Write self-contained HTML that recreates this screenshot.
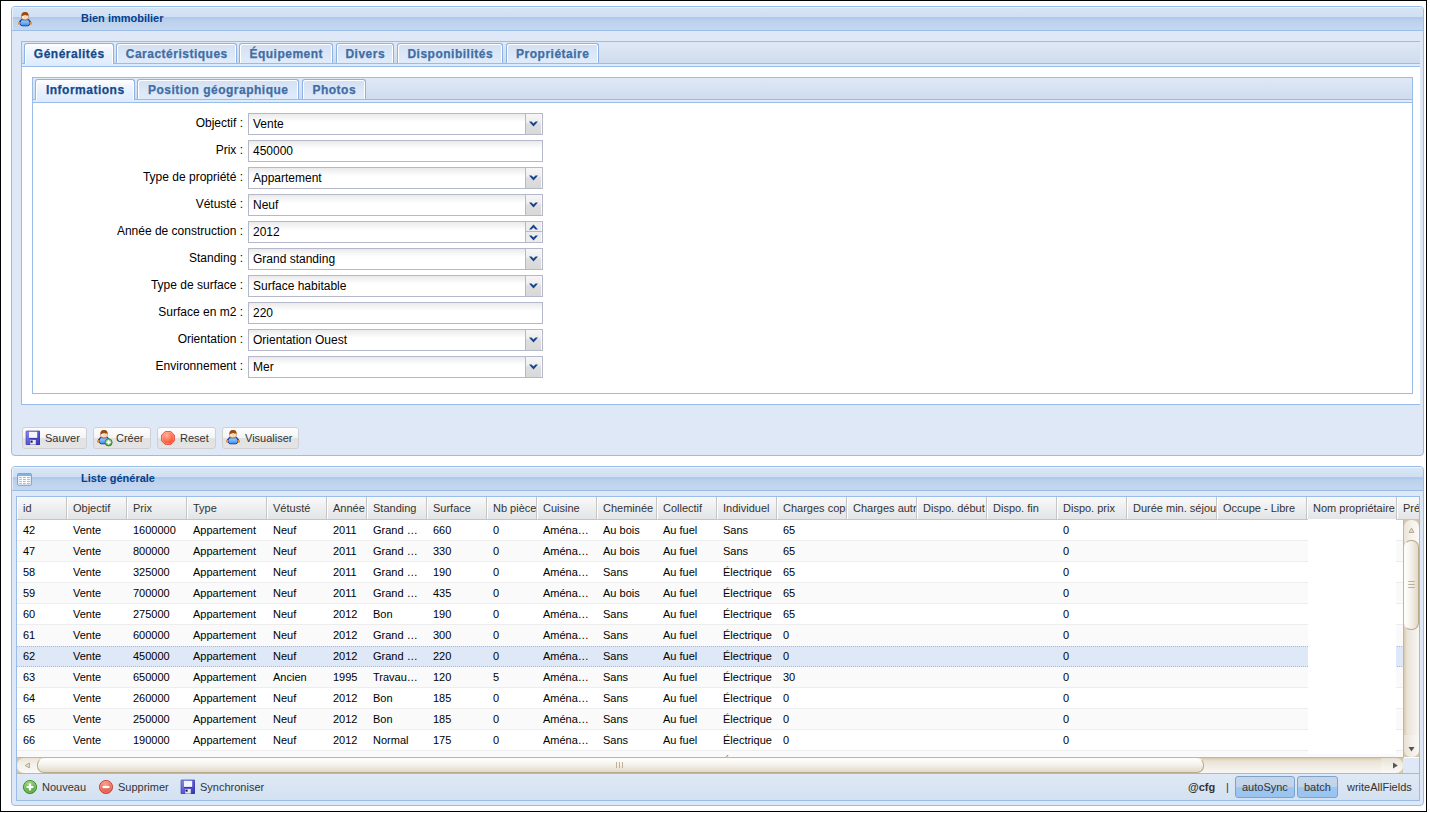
<!DOCTYPE html>
<html><head><meta charset="utf-8">
<style>
*{box-sizing:border-box;margin:0;padding:0}
html,body{width:1430px;height:813px;overflow:hidden;background:#fff;font-family:"Liberation Sans",sans-serif;color:#000}
.a{position:absolute}
#frame{left:0;top:0;width:1427px;height:812px;border:1px solid #000}
.panel{border:1px solid #99bce8;border-radius:4px;background:#dfe8f6;overflow:hidden}
.phdr{left:0;top:0;right:0;height:24px;border-bottom:1px solid #99bce8;
 background:linear-gradient(#d9e6f5 0px,#cfdff2 10px,#abc6ea 10.6px,#b3cbeb 12px,#bbd0ec 13px,#c6d8ef 23px);
 box-shadow:inset 1px 1px 0 rgba(255,255,255,.55)}
.ptitle{font:bold 11px "Liberation Sans",sans-serif;color:#04408c;white-space:nowrap}
.tabbar{border-top:1px solid #99bce8;border-left:1px solid #99bce8;background:linear-gradient(#dfe8f5,#cfdcee)}
.strip{height:4px;border-top:1px solid #99bce8;border-bottom:1px solid #99bce8;background:#deecfd}
.tab{top:2px;height:20px;border:1px solid #8db2e3;border-bottom:0;border-radius:3px 3px 0 0;
 background:linear-gradient(#d3e0f3,#dce8f8 60%,#e0ebfa);box-shadow:inset 1px 1px 0 #fff,inset -1px 0 0 #fff;
 font:bold 12px "Liberation Sans",sans-serif;color:#416da3;text-align:center;line-height:20px;white-space:nowrap;letter-spacing:0.5px;text-indent:0.5px;-webkit-text-stroke:0.25px currentColor}
.tab.act{height:21px;overflow:visible;background:linear-gradient(#fff 0%,#eef5fe 30%,#deecfd 100%);color:#15498b}
.lbl{font:12px "Liberation Sans",sans-serif;text-align:right;white-space:nowrap;width:200px;left:43px}
.fld{left:248px;width:295px;height:22px;border:1px solid #b5b8c8;background:linear-gradient(#eaeaea 0,#fff 8px,#fff);
 font:12px "Liberation Sans",sans-serif;padding-left:4px;line-height:20px;white-space:nowrap}
.trg{right:0;top:0;width:17px;height:20px;border-left:1px solid #b5b8c8;background:linear-gradient(#f6f6f6 0,#eeeeee 40%,#dedede 50%,#d8d8d8 100%);box-shadow:inset -1px 0 0 #fafafa}
.btn{top:427px;height:22px;border:1px solid #d0d0d0;border-radius:3px;
 background:linear-gradient(#fdfdfd 0,#f4f4f4 50%,#e2e2e2 50%,#e4e4e4 100%);
 font:11px "Liberation Sans",sans-serif;color:#333;white-space:nowrap}
.ghd{font:11px "Liberation Sans",sans-serif;color:#333;white-space:nowrap}
.cell{font:11px "Liberation Sans",sans-serif;white-space:nowrap}
.tb{font:11px "Liberation Sans",sans-serif;color:#333;white-space:nowrap}
.tab.act::after{content:"";position:absolute;left:0;right:0;bottom:-1px;height:1px;background:#deecfd}
</style></head><body>
<svg width="0" height="0" style="position:absolute">
<defs>
 <linearGradient id="gBody" x1="0" y1="0" x2="0" y2="1"><stop offset="0" stop-color="#9ad8ff"/><stop offset="1" stop-color="#3b8cf2"/></linearGradient>
 <radialGradient id="gFace" cx="0.5" cy="0.55" r="0.5"><stop offset="0" stop-color="#fde3c6"/><stop offset="1" stop-color="#efb883"/></radialGradient>
 <linearGradient id="gDisk" x1="0" y1="0" x2="1" y2="1"><stop offset="0" stop-color="#8f8ff0"/><stop offset="0.5" stop-color="#5a5ad8"/><stop offset="1" stop-color="#3434a8"/></linearGradient>
 <radialGradient id="gRed" cx="0.4" cy="0.3" r="0.75"><stop offset="0" stop-color="#ffb49a"/><stop offset="0.6" stop-color="#ff6a48"/><stop offset="1" stop-color="#f03a18"/></radialGradient>
 <radialGradient id="gRed2" cx="0.45" cy="0.3" r="0.7"><stop offset="0" stop-color="#f7a690"/><stop offset="1" stop-color="#e0463a"/></radialGradient>
 <radialGradient id="gGreen" cx="0.45" cy="0.3" r="0.7"><stop offset="0" stop-color="#a8dc8c"/><stop offset="1" stop-color="#3f9a2c"/></radialGradient>
 <symbol id="iUser" viewBox="0 0 16 16">
  <path d="M4.9 8.1L2.3 11.2M11.1 8.1L13.7 11.2" stroke="#1b3db5" stroke-width="1.2"/>
  <path d="M4.3 8.8H11.7L12.9 11.6L12.3 14.1L10.9 14.8H5.1L3.7 14.1L3.1 11.6Z" fill="url(#gBody)" stroke="#1d3aa6" stroke-width="0.95"/>
  <ellipse cx="2.2" cy="12.3" rx="1.2" ry="1.55" fill="#e98a2c"/>
  <ellipse cx="13.8" cy="12.3" rx="1.2" ry="1.55" fill="#e98a2c"/>
  <path d="M4.8 4.5Q4.7 1.3 8 1.3Q11.3 1.3 11.2 4.5L11.1 7.3Q10.6 9 8 9Q5.4 9 4.9 7.3Z" fill="#f8d7b4" stroke="#b9672a" stroke-width="0.7"/>
  <circle cx="6" cy="6" r="0.9" fill="#fff" opacity="0.8"/><circle cx="10.4" cy="6" r="0.8" fill="#fff" opacity="0.7"/>
  <path d="M4.45 5.6Q4.1 1.05 8 1.05Q11.9 1.05 11.55 5.2Q11 4.2 10.3 4.4Q9.4 4.9 8.8 4.2Q7.4 3.6 4.45 5.6Z" fill="#9c4a14"/>
 </symbol>
 <symbol id="iDisk" viewBox="0 0 16 16">
  <rect x="2" y="2" width="14" height="14" rx="0.8" fill="url(#gDisk)" stroke="#3030a0" stroke-width="0.6"/>
  <rect x="5" y="2.8" width="8.2" height="6.4" fill="#f4f6fb"/>
  <path d="M5 9.4H13.2" stroke="#2a2ab0" stroke-width="0.9"/>
  <rect x="6.2" y="11" width="5.6" height="4.6" fill="#e8e8f0"/>
  <rect x="6.6" y="11.6" width="2" height="2" fill="#111"/>
 </symbol>
 <symbol id="iGrid" viewBox="0 0 16 16">
  <rect x="1.7" y="2.6" width="13.6" height="11.6" rx="0.7" fill="#fff" stroke="#5b8ed0" stroke-width="0.9"/>
  <rect x="1.7" y="2.6" width="13.6" height="2.4" fill="#80b2e8"/>
  <g stroke="#a8a8a8" stroke-width="0.9">
   <path d="M3.2 6.4H5.9M7 6.4H9.8M11 6.4H13.9"/>
   <path d="M3.2 8.4H5.9M7 8.4H9.8M11 8.4H13.9"/>
   <path d="M3.2 10.4H5.9M7 10.4H9.8M11 10.4H13.9"/>
   <path d="M3.2 12.4H5.9M7 12.4H9.8M11 12.4H13.9"/>
  </g>
 </symbol>
 <symbol id="iStop" viewBox="0 0 16 16">
  <path d="M5.2 1.5H10.8L14.5 5.2V10.8L10.8 14.5H5.2L1.5 10.8V5.2Z" fill="url(#gRed)" stroke="#e0564a" stroke-width="0.9"/>
  <path d="M5.6 2.6H10.4L13.4 5.6V10.4L10.4 13.4H5.6L2.6 10.4V5.6Z" fill="none" stroke="#ffc0b0" stroke-width="0.6" opacity="0.8"/>
 </symbol>
 <symbol id="iAdd" viewBox="0 0 16 16">
  <circle cx="8" cy="8" r="6.6" fill="url(#gGreen)" stroke="#3c8c2a" stroke-width="0.9"/>
  <circle cx="8" cy="8" r="5.4" fill="none" stroke="#c8ecb8" stroke-width="0.5" opacity="0.7"/>
  <path d="M8 4.6V11.4M4.6 8H11.4" stroke="#fff" stroke-width="2.2"/>
 </symbol>
 <symbol id="iDel" viewBox="0 0 16 16">
  <circle cx="8" cy="8" r="6.6" fill="url(#gRed2)" stroke="#c84434" stroke-width="0.9"/>
  <circle cx="8" cy="8" r="5.4" fill="none" stroke="#f8c8c0" stroke-width="0.5" opacity="0.7"/>
  <path d="M4.6 8H11.4" stroke="#fff" stroke-width="2.2"/>
 </symbol>
</defs></svg>
<div id="frame" class="a"></div>

<!-- PANEL 1 -->
<div class="a panel" style="left:11px;top:6px;width:1413px;height:450px">
 <div class="a phdr"></div>
</div>
<div class="a ptitle" style="left:81px;top:12px">Bien immobilier</div>

<!-- OUTER TABPANEL -->
<div class="a" style="left:21px;top:41px;width:1399px;height:364px;border:1px solid #99bce8;border-right:0;background:#fff"></div>
<div class="a tabbar" style="left:22px;top:42px;width:1398px;height:21px;border:0"></div>
<div class="a strip" style="left:22px;top:63px;width:1398px"></div>
<div class="a tab act" style="left:24px;top:43px;width:90px">Généralités</div>
<div class="a tab" style="left:116px;top:43px;width:121px">Caractéristiques</div>
<div class="a tab" style="left:239px;top:43px;width:94px">Équipement</div>
<div class="a tab" style="left:336px;top:43px;width:58px">Divers</div>
<div class="a tab" style="left:397px;top:43px;width:106px">Disponibilités</div>
<div class="a tab" style="left:506px;top:43px;width:93px">Propriétaire</div>

<!-- INNER TABPANEL -->
<div class="a" style="left:32px;top:77px;width:1381px;height:317px;border:1px solid #99bce8;background:#fff"></div>
<div class="a tabbar" style="left:33px;top:78px;width:1379px;height:21px;border:0"></div>
<div class="a strip" style="left:33px;top:99px;width:1379px"></div>
<div class="a tab act" style="left:35px;top:79px;width:100px">Informations</div>
<div class="a tab" style="left:137px;top:79px;width:162px">Position géographique</div>
<div class="a tab" style="left:302px;top:79px;width:64px">Photos</div>


<!-- FORM -->
<div class="a lbl" style="top:116px">Objectif :</div>
<div class="a fld" style="top:113px">Vente<div class="a trg"><svg class="a" style="left:3px;top:7px" width="9" height="6" viewBox="0 0 9 6"><path d="M0 0.5h2.5L4.5 2.5L6.5 0.5H9L4.5 5.5Z" fill="#15428b"/></svg></div></div>
<div class="a lbl" style="top:143px">Prix :</div>
<div class="a fld" style="top:140px">450000</div>
<div class="a lbl" style="top:170px">Type de propriété :</div>
<div class="a fld" style="top:167px">Appartement<div class="a trg"><svg class="a" style="left:3px;top:7px" width="9" height="6" viewBox="0 0 9 6"><path d="M0 0.5h2.5L4.5 2.5L6.5 0.5H9L4.5 5.5Z" fill="#15428b"/></svg></div></div>
<div class="a lbl" style="top:197px">Vétusté :</div>
<div class="a fld" style="top:194px">Neuf<div class="a trg"><svg class="a" style="left:3px;top:7px" width="9" height="6" viewBox="0 0 9 6"><path d="M0 0.5h2.5L4.5 2.5L6.5 0.5H9L4.5 5.5Z" fill="#15428b"/></svg></div></div>
<div class="a lbl" style="top:224px">Année de construction :</div>
<div class="a fld" style="top:221px">2012<div class="a trg" style="background:#ececec"><div class="a" style="left:0;top:9px;width:16px;height:1px;background:#b5b8c8"></div><svg class="a" style="left:3px;top:2px" width="9" height="17" viewBox="0 0 9 17"><path d="M0 5.5h2.5L4.5 3.5L6.5 5.5H9L4.5 0.5Z" fill="#15428b"/><path d="M0 11.5h2.5L4.5 13.5L6.5 11.5H9L4.5 16.5Z" fill="#15428b"/></svg></div></div>
<div class="a lbl" style="top:251px">Standing :</div>
<div class="a fld" style="top:248px">Grand standing<div class="a trg"><svg class="a" style="left:3px;top:7px" width="9" height="6" viewBox="0 0 9 6"><path d="M0 0.5h2.5L4.5 2.5L6.5 0.5H9L4.5 5.5Z" fill="#15428b"/></svg></div></div>
<div class="a lbl" style="top:278px">Type de surface :</div>
<div class="a fld" style="top:275px">Surface habitable<div class="a trg"><svg class="a" style="left:3px;top:7px" width="9" height="6" viewBox="0 0 9 6"><path d="M0 0.5h2.5L4.5 2.5L6.5 0.5H9L4.5 5.5Z" fill="#15428b"/></svg></div></div>
<div class="a lbl" style="top:305px">Surface en m2 :</div>
<div class="a fld" style="top:302px">220</div>
<div class="a lbl" style="top:332px">Orientation :</div>
<div class="a fld" style="top:329px">Orientation Ouest<div class="a trg"><svg class="a" style="left:3px;top:7px" width="9" height="6" viewBox="0 0 9 6"><path d="M0 0.5h2.5L4.5 2.5L6.5 0.5H9L4.5 5.5Z" fill="#15428b"/></svg></div></div>
<div class="a lbl" style="top:359px">Environnement :</div>
<div class="a fld" style="top:356px">Mer<div class="a trg"><svg class="a" style="left:3px;top:7px" width="9" height="6" viewBox="0 0 9 6"><path d="M0 0.5h2.5L4.5 2.5L6.5 0.5H9L4.5 5.5Z" fill="#15428b"/></svg></div></div>

<!-- BUTTONS -->
<div class="a btn" style="left:22px;width:65px"><span class="a" style="left:22px;top:4px">Sauver</span></div>
<div class="a btn" style="left:93px;width:58px"><span class="a" style="left:22px;top:4px">Créer</span></div>
<div class="a btn" style="left:157px;width:59px"><span class="a" style="left:22px;top:4px">Reset</span></div>
<div class="a btn" style="left:222px;width:77px"><span class="a" style="left:22px;top:4px">Visualiser</span></div>

<!-- PANEL 2 -->
<div class="a panel" style="left:11px;top:466px;width:1413px;height:340px">
 <div class="a phdr"></div>
</div>
<div class="a ptitle" style="left:81px;top:472px">Liste générale</div>

<!-- GRID -->
<div class="a" style="left:16px;top:496px;width:1404px;height:262px;border:1px solid #99bce8;border-bottom:0;background:#fff;overflow:hidden">
 <div class="a" style="left:0;top:0;width:1402px;height:23px;border-bottom:1px solid #c5c5c5;background:linear-gradient(#f9f9f9,#e3e4e6)">
  <div class="a ghd" style="left:0px;top:0;width:50px;height:22px;border-right:1px solid #c5c5c5;box-shadow:inset 1px 0 0 #fff;overflow:hidden;padding-left:6px;line-height:23px">id</div>
  <div class="a ghd" style="left:50px;top:0;width:60px;height:22px;border-right:1px solid #c5c5c5;box-shadow:inset 1px 0 0 #fff;overflow:hidden;padding-left:6px;line-height:23px">Objectif</div>
  <div class="a ghd" style="left:110px;top:0;width:60px;height:22px;border-right:1px solid #c5c5c5;box-shadow:inset 1px 0 0 #fff;overflow:hidden;padding-left:6px;line-height:23px">Prix</div>
  <div class="a ghd" style="left:170px;top:0;width:80px;height:22px;border-right:1px solid #c5c5c5;box-shadow:inset 1px 0 0 #fff;overflow:hidden;padding-left:6px;line-height:23px">Type</div>
  <div class="a ghd" style="left:250px;top:0;width:60px;height:22px;border-right:1px solid #c5c5c5;box-shadow:inset 1px 0 0 #fff;overflow:hidden;padding-left:6px;line-height:23px">Vétusté</div>
  <div class="a ghd" style="left:310px;top:0;width:40px;height:22px;border-right:1px solid #c5c5c5;box-shadow:inset 1px 0 0 #fff;overflow:hidden;padding-left:6px;line-height:23px">Année</div>
  <div class="a ghd" style="left:350px;top:0;width:60px;height:22px;border-right:1px solid #c5c5c5;box-shadow:inset 1px 0 0 #fff;overflow:hidden;padding-left:6px;line-height:23px">Standing</div>
  <div class="a ghd" style="left:410px;top:0;width:60px;height:22px;border-right:1px solid #c5c5c5;box-shadow:inset 1px 0 0 #fff;overflow:hidden;padding-left:6px;line-height:23px">Surface</div>
  <div class="a ghd" style="left:470px;top:0;width:50px;height:22px;border-right:1px solid #c5c5c5;box-shadow:inset 1px 0 0 #fff;overflow:hidden;padding-left:6px;line-height:23px">Nb pièce</div>
  <div class="a ghd" style="left:520px;top:0;width:60px;height:22px;border-right:1px solid #c5c5c5;box-shadow:inset 1px 0 0 #fff;overflow:hidden;padding-left:6px;line-height:23px">Cuisine</div>
  <div class="a ghd" style="left:580px;top:0;width:60px;height:22px;border-right:1px solid #c5c5c5;box-shadow:inset 1px 0 0 #fff;overflow:hidden;padding-left:6px;line-height:23px">Cheminée</div>
  <div class="a ghd" style="left:640px;top:0;width:60px;height:22px;border-right:1px solid #c5c5c5;box-shadow:inset 1px 0 0 #fff;overflow:hidden;padding-left:6px;line-height:23px">Collectif</div>
  <div class="a ghd" style="left:700px;top:0;width:60px;height:22px;border-right:1px solid #c5c5c5;box-shadow:inset 1px 0 0 #fff;overflow:hidden;padding-left:6px;line-height:23px">Individuel</div>
  <div class="a ghd" style="left:760px;top:0;width:70px;height:22px;border-right:1px solid #c5c5c5;box-shadow:inset 1px 0 0 #fff;overflow:hidden;padding-left:6px;line-height:23px">Charges copropriété</div>
  <div class="a ghd" style="left:830px;top:0;width:70px;height:22px;border-right:1px solid #c5c5c5;box-shadow:inset 1px 0 0 #fff;overflow:hidden;padding-left:6px;line-height:23px">Charges autres</div>
  <div class="a ghd" style="left:900px;top:0;width:70px;height:22px;border-right:1px solid #c5c5c5;box-shadow:inset 1px 0 0 #fff;overflow:hidden;padding-left:6px;line-height:23px">Dispo. début</div>
  <div class="a ghd" style="left:970px;top:0;width:70px;height:22px;border-right:1px solid #c5c5c5;box-shadow:inset 1px 0 0 #fff;overflow:hidden;padding-left:6px;line-height:23px">Dispo. fin</div>
  <div class="a ghd" style="left:1040px;top:0;width:70px;height:22px;border-right:1px solid #c5c5c5;box-shadow:inset 1px 0 0 #fff;overflow:hidden;padding-left:6px;line-height:23px">Dispo. prix</div>
  <div class="a ghd" style="left:1110px;top:0;width:90px;height:22px;border-right:1px solid #c5c5c5;box-shadow:inset 1px 0 0 #fff;overflow:hidden;padding-left:6px;line-height:23px">Durée min. séjour</div>
  <div class="a ghd" style="left:1200px;top:0;width:90px;height:22px;border-right:1px solid #c5c5c5;box-shadow:inset 1px 0 0 #fff;overflow:hidden;padding-left:6px;line-height:23px">Occupe - Libre</div>
  <div class="a ghd" style="left:1290px;top:0;width:90px;height:22px;border-right:1px solid #c5c5c5;box-shadow:inset 1px 0 0 #fff;overflow:hidden;padding-left:6px;line-height:23px">Nom propriétaire</div>
  <div class="a ghd" style="left:1380px;top:0;width:90px;height:22px;border-right:1px solid #c5c5c5;box-shadow:inset 1px 0 0 #fff;overflow:hidden;padding-left:6px;line-height:23px">Prénom propriétaire</div>
 </div>
 <div class="a" style="left:0;top:23px;width:1386px;height:238px;overflow:hidden">
  <div class="a" style="left:0;top:0px;width:1386px;height:21px;background:#fff;border-bottom:1px solid #ededed">
   <div class="a cell" style="left:0px;top:0;width:50px;height:20px;overflow:hidden;padding-left:6px;line-height:21px">42</div>
   <div class="a cell" style="left:50px;top:0;width:60px;height:20px;overflow:hidden;padding-left:6px;line-height:21px">Vente</div>
   <div class="a cell" style="left:110px;top:0;width:60px;height:20px;overflow:hidden;padding-left:6px;line-height:21px">1600000</div>
   <div class="a cell" style="left:170px;top:0;width:80px;height:20px;overflow:hidden;padding-left:6px;line-height:21px">Appartement</div>
   <div class="a cell" style="left:250px;top:0;width:60px;height:20px;overflow:hidden;padding-left:6px;line-height:21px">Neuf</div>
   <div class="a cell" style="left:310px;top:0;width:40px;height:20px;overflow:hidden;padding-left:6px;line-height:21px">2011</div>
   <div class="a cell" style="left:350px;top:0;width:60px;height:20px;overflow:hidden;padding-left:6px;line-height:21px">Grand …</div>
   <div class="a cell" style="left:410px;top:0;width:60px;height:20px;overflow:hidden;padding-left:6px;line-height:21px">660</div>
   <div class="a cell" style="left:470px;top:0;width:50px;height:20px;overflow:hidden;padding-left:6px;line-height:21px">0</div>
   <div class="a cell" style="left:520px;top:0;width:60px;height:20px;overflow:hidden;padding-left:6px;line-height:21px">Aména…</div>
   <div class="a cell" style="left:580px;top:0;width:60px;height:20px;overflow:hidden;padding-left:6px;line-height:21px">Au bois</div>
   <div class="a cell" style="left:640px;top:0;width:60px;height:20px;overflow:hidden;padding-left:6px;line-height:21px">Au fuel</div>
   <div class="a cell" style="left:700px;top:0;width:60px;height:20px;overflow:hidden;padding-left:6px;line-height:21px">Sans</div>
   <div class="a cell" style="left:760px;top:0;width:70px;height:20px;overflow:hidden;padding-left:6px;line-height:21px">65</div>
   <div class="a cell" style="left:1040px;top:0;width:90px;height:20px;overflow:hidden;padding-left:6px;line-height:21px">0</div>
  </div>
  <div class="a" style="left:0;top:21px;width:1386px;height:21px;background:#fafafa;border-bottom:1px solid #ededed">
   <div class="a cell" style="left:0px;top:0;width:50px;height:20px;overflow:hidden;padding-left:6px;line-height:21px">47</div>
   <div class="a cell" style="left:50px;top:0;width:60px;height:20px;overflow:hidden;padding-left:6px;line-height:21px">Vente</div>
   <div class="a cell" style="left:110px;top:0;width:60px;height:20px;overflow:hidden;padding-left:6px;line-height:21px">800000</div>
   <div class="a cell" style="left:170px;top:0;width:80px;height:20px;overflow:hidden;padding-left:6px;line-height:21px">Appartement</div>
   <div class="a cell" style="left:250px;top:0;width:60px;height:20px;overflow:hidden;padding-left:6px;line-height:21px">Neuf</div>
   <div class="a cell" style="left:310px;top:0;width:40px;height:20px;overflow:hidden;padding-left:6px;line-height:21px">2011</div>
   <div class="a cell" style="left:350px;top:0;width:60px;height:20px;overflow:hidden;padding-left:6px;line-height:21px">Grand …</div>
   <div class="a cell" style="left:410px;top:0;width:60px;height:20px;overflow:hidden;padding-left:6px;line-height:21px">330</div>
   <div class="a cell" style="left:470px;top:0;width:50px;height:20px;overflow:hidden;padding-left:6px;line-height:21px">0</div>
   <div class="a cell" style="left:520px;top:0;width:60px;height:20px;overflow:hidden;padding-left:6px;line-height:21px">Aména…</div>
   <div class="a cell" style="left:580px;top:0;width:60px;height:20px;overflow:hidden;padding-left:6px;line-height:21px">Au bois</div>
   <div class="a cell" style="left:640px;top:0;width:60px;height:20px;overflow:hidden;padding-left:6px;line-height:21px">Au fuel</div>
   <div class="a cell" style="left:700px;top:0;width:60px;height:20px;overflow:hidden;padding-left:6px;line-height:21px">Sans</div>
   <div class="a cell" style="left:760px;top:0;width:70px;height:20px;overflow:hidden;padding-left:6px;line-height:21px">65</div>
   <div class="a cell" style="left:1040px;top:0;width:90px;height:20px;overflow:hidden;padding-left:6px;line-height:21px">0</div>
  </div>
  <div class="a" style="left:0;top:42px;width:1386px;height:21px;background:#fff;border-bottom:1px solid #ededed">
   <div class="a cell" style="left:0px;top:0;width:50px;height:20px;overflow:hidden;padding-left:6px;line-height:21px">58</div>
   <div class="a cell" style="left:50px;top:0;width:60px;height:20px;overflow:hidden;padding-left:6px;line-height:21px">Vente</div>
   <div class="a cell" style="left:110px;top:0;width:60px;height:20px;overflow:hidden;padding-left:6px;line-height:21px">325000</div>
   <div class="a cell" style="left:170px;top:0;width:80px;height:20px;overflow:hidden;padding-left:6px;line-height:21px">Appartement</div>
   <div class="a cell" style="left:250px;top:0;width:60px;height:20px;overflow:hidden;padding-left:6px;line-height:21px">Neuf</div>
   <div class="a cell" style="left:310px;top:0;width:40px;height:20px;overflow:hidden;padding-left:6px;line-height:21px">2011</div>
   <div class="a cell" style="left:350px;top:0;width:60px;height:20px;overflow:hidden;padding-left:6px;line-height:21px">Grand …</div>
   <div class="a cell" style="left:410px;top:0;width:60px;height:20px;overflow:hidden;padding-left:6px;line-height:21px">190</div>
   <div class="a cell" style="left:470px;top:0;width:50px;height:20px;overflow:hidden;padding-left:6px;line-height:21px">0</div>
   <div class="a cell" style="left:520px;top:0;width:60px;height:20px;overflow:hidden;padding-left:6px;line-height:21px">Aména…</div>
   <div class="a cell" style="left:580px;top:0;width:60px;height:20px;overflow:hidden;padding-left:6px;line-height:21px">Sans</div>
   <div class="a cell" style="left:640px;top:0;width:60px;height:20px;overflow:hidden;padding-left:6px;line-height:21px">Au fuel</div>
   <div class="a cell" style="left:700px;top:0;width:60px;height:20px;overflow:hidden;padding-left:6px;line-height:21px">Électrique</div>
   <div class="a cell" style="left:760px;top:0;width:70px;height:20px;overflow:hidden;padding-left:6px;line-height:21px">65</div>
   <div class="a cell" style="left:1040px;top:0;width:90px;height:20px;overflow:hidden;padding-left:6px;line-height:21px">0</div>
  </div>
  <div class="a" style="left:0;top:63px;width:1386px;height:21px;background:#fafafa;border-bottom:1px solid #ededed">
   <div class="a cell" style="left:0px;top:0;width:50px;height:20px;overflow:hidden;padding-left:6px;line-height:21px">59</div>
   <div class="a cell" style="left:50px;top:0;width:60px;height:20px;overflow:hidden;padding-left:6px;line-height:21px">Vente</div>
   <div class="a cell" style="left:110px;top:0;width:60px;height:20px;overflow:hidden;padding-left:6px;line-height:21px">700000</div>
   <div class="a cell" style="left:170px;top:0;width:80px;height:20px;overflow:hidden;padding-left:6px;line-height:21px">Appartement</div>
   <div class="a cell" style="left:250px;top:0;width:60px;height:20px;overflow:hidden;padding-left:6px;line-height:21px">Neuf</div>
   <div class="a cell" style="left:310px;top:0;width:40px;height:20px;overflow:hidden;padding-left:6px;line-height:21px">2011</div>
   <div class="a cell" style="left:350px;top:0;width:60px;height:20px;overflow:hidden;padding-left:6px;line-height:21px">Grand …</div>
   <div class="a cell" style="left:410px;top:0;width:60px;height:20px;overflow:hidden;padding-left:6px;line-height:21px">435</div>
   <div class="a cell" style="left:470px;top:0;width:50px;height:20px;overflow:hidden;padding-left:6px;line-height:21px">0</div>
   <div class="a cell" style="left:520px;top:0;width:60px;height:20px;overflow:hidden;padding-left:6px;line-height:21px">Aména…</div>
   <div class="a cell" style="left:580px;top:0;width:60px;height:20px;overflow:hidden;padding-left:6px;line-height:21px">Au bois</div>
   <div class="a cell" style="left:640px;top:0;width:60px;height:20px;overflow:hidden;padding-left:6px;line-height:21px">Au fuel</div>
   <div class="a cell" style="left:700px;top:0;width:60px;height:20px;overflow:hidden;padding-left:6px;line-height:21px">Électrique</div>
   <div class="a cell" style="left:760px;top:0;width:70px;height:20px;overflow:hidden;padding-left:6px;line-height:21px">65</div>
   <div class="a cell" style="left:1040px;top:0;width:90px;height:20px;overflow:hidden;padding-left:6px;line-height:21px">0</div>
  </div>
  <div class="a" style="left:0;top:84px;width:1386px;height:21px;background:#fff;border-bottom:1px solid #ededed">
   <div class="a cell" style="left:0px;top:0;width:50px;height:20px;overflow:hidden;padding-left:6px;line-height:21px">60</div>
   <div class="a cell" style="left:50px;top:0;width:60px;height:20px;overflow:hidden;padding-left:6px;line-height:21px">Vente</div>
   <div class="a cell" style="left:110px;top:0;width:60px;height:20px;overflow:hidden;padding-left:6px;line-height:21px">275000</div>
   <div class="a cell" style="left:170px;top:0;width:80px;height:20px;overflow:hidden;padding-left:6px;line-height:21px">Appartement</div>
   <div class="a cell" style="left:250px;top:0;width:60px;height:20px;overflow:hidden;padding-left:6px;line-height:21px">Neuf</div>
   <div class="a cell" style="left:310px;top:0;width:40px;height:20px;overflow:hidden;padding-left:6px;line-height:21px">2012</div>
   <div class="a cell" style="left:350px;top:0;width:60px;height:20px;overflow:hidden;padding-left:6px;line-height:21px">Bon</div>
   <div class="a cell" style="left:410px;top:0;width:60px;height:20px;overflow:hidden;padding-left:6px;line-height:21px">190</div>
   <div class="a cell" style="left:470px;top:0;width:50px;height:20px;overflow:hidden;padding-left:6px;line-height:21px">0</div>
   <div class="a cell" style="left:520px;top:0;width:60px;height:20px;overflow:hidden;padding-left:6px;line-height:21px">Aména…</div>
   <div class="a cell" style="left:580px;top:0;width:60px;height:20px;overflow:hidden;padding-left:6px;line-height:21px">Sans</div>
   <div class="a cell" style="left:640px;top:0;width:60px;height:20px;overflow:hidden;padding-left:6px;line-height:21px">Au fuel</div>
   <div class="a cell" style="left:700px;top:0;width:60px;height:20px;overflow:hidden;padding-left:6px;line-height:21px">Électrique</div>
   <div class="a cell" style="left:760px;top:0;width:70px;height:20px;overflow:hidden;padding-left:6px;line-height:21px">65</div>
   <div class="a cell" style="left:1040px;top:0;width:90px;height:20px;overflow:hidden;padding-left:6px;line-height:21px">0</div>
  </div>
  <div class="a" style="left:0;top:105px;width:1386px;height:21px;background:#fafafa;border-bottom:1px solid #fafafa">
   <div class="a cell" style="left:0px;top:0;width:50px;height:20px;overflow:hidden;padding-left:6px;line-height:21px">61</div>
   <div class="a cell" style="left:50px;top:0;width:60px;height:20px;overflow:hidden;padding-left:6px;line-height:21px">Vente</div>
   <div class="a cell" style="left:110px;top:0;width:60px;height:20px;overflow:hidden;padding-left:6px;line-height:21px">600000</div>
   <div class="a cell" style="left:170px;top:0;width:80px;height:20px;overflow:hidden;padding-left:6px;line-height:21px">Appartement</div>
   <div class="a cell" style="left:250px;top:0;width:60px;height:20px;overflow:hidden;padding-left:6px;line-height:21px">Neuf</div>
   <div class="a cell" style="left:310px;top:0;width:40px;height:20px;overflow:hidden;padding-left:6px;line-height:21px">2012</div>
   <div class="a cell" style="left:350px;top:0;width:60px;height:20px;overflow:hidden;padding-left:6px;line-height:21px">Grand …</div>
   <div class="a cell" style="left:410px;top:0;width:60px;height:20px;overflow:hidden;padding-left:6px;line-height:21px">300</div>
   <div class="a cell" style="left:470px;top:0;width:50px;height:20px;overflow:hidden;padding-left:6px;line-height:21px">0</div>
   <div class="a cell" style="left:520px;top:0;width:60px;height:20px;overflow:hidden;padding-left:6px;line-height:21px">Aména…</div>
   <div class="a cell" style="left:580px;top:0;width:60px;height:20px;overflow:hidden;padding-left:6px;line-height:21px">Sans</div>
   <div class="a cell" style="left:640px;top:0;width:60px;height:20px;overflow:hidden;padding-left:6px;line-height:21px">Au fuel</div>
   <div class="a cell" style="left:700px;top:0;width:60px;height:20px;overflow:hidden;padding-left:6px;line-height:21px">Électrique</div>
   <div class="a cell" style="left:760px;top:0;width:70px;height:20px;overflow:hidden;padding-left:6px;line-height:21px">0</div>
   <div class="a cell" style="left:1040px;top:0;width:90px;height:20px;overflow:hidden;padding-left:6px;line-height:21px">0</div>
  </div>
  <div class="a" style="left:0;top:126px;width:1386px;height:21px;background:#dfe8f6;border-bottom:1px solid #ededed">
   <div class="a cell" style="left:0px;top:0;width:50px;height:20px;overflow:hidden;padding-left:6px;line-height:21px">62</div>
   <div class="a cell" style="left:50px;top:0;width:60px;height:20px;overflow:hidden;padding-left:6px;line-height:21px">Vente</div>
   <div class="a cell" style="left:110px;top:0;width:60px;height:20px;overflow:hidden;padding-left:6px;line-height:21px">450000</div>
   <div class="a cell" style="left:170px;top:0;width:80px;height:20px;overflow:hidden;padding-left:6px;line-height:21px">Appartement</div>
   <div class="a cell" style="left:250px;top:0;width:60px;height:20px;overflow:hidden;padding-left:6px;line-height:21px">Neuf</div>
   <div class="a cell" style="left:310px;top:0;width:40px;height:20px;overflow:hidden;padding-left:6px;line-height:21px">2012</div>
   <div class="a cell" style="left:350px;top:0;width:60px;height:20px;overflow:hidden;padding-left:6px;line-height:21px">Grand …</div>
   <div class="a cell" style="left:410px;top:0;width:60px;height:20px;overflow:hidden;padding-left:6px;line-height:21px">220</div>
   <div class="a cell" style="left:470px;top:0;width:50px;height:20px;overflow:hidden;padding-left:6px;line-height:21px">0</div>
   <div class="a cell" style="left:520px;top:0;width:60px;height:20px;overflow:hidden;padding-left:6px;line-height:21px">Aména…</div>
   <div class="a cell" style="left:580px;top:0;width:60px;height:20px;overflow:hidden;padding-left:6px;line-height:21px">Sans</div>
   <div class="a cell" style="left:640px;top:0;width:60px;height:20px;overflow:hidden;padding-left:6px;line-height:21px">Au fuel</div>
   <div class="a cell" style="left:700px;top:0;width:60px;height:20px;overflow:hidden;padding-left:6px;line-height:21px">Électrique</div>
   <div class="a cell" style="left:760px;top:0;width:70px;height:20px;overflow:hidden;padding-left:6px;line-height:21px">0</div>
   <div class="a cell" style="left:1040px;top:0;width:90px;height:20px;overflow:hidden;padding-left:6px;line-height:21px">0</div>
  </div>
  <div class="a" style="left:0;top:147px;width:1386px;height:21px;background:#fafafa;border-bottom:1px solid #ededed">
   <div class="a cell" style="left:0px;top:0;width:50px;height:20px;overflow:hidden;padding-left:6px;line-height:21px">63</div>
   <div class="a cell" style="left:50px;top:0;width:60px;height:20px;overflow:hidden;padding-left:6px;line-height:21px">Vente</div>
   <div class="a cell" style="left:110px;top:0;width:60px;height:20px;overflow:hidden;padding-left:6px;line-height:21px">650000</div>
   <div class="a cell" style="left:170px;top:0;width:80px;height:20px;overflow:hidden;padding-left:6px;line-height:21px">Appartement</div>
   <div class="a cell" style="left:250px;top:0;width:60px;height:20px;overflow:hidden;padding-left:6px;line-height:21px">Ancien</div>
   <div class="a cell" style="left:310px;top:0;width:40px;height:20px;overflow:hidden;padding-left:6px;line-height:21px">1995</div>
   <div class="a cell" style="left:350px;top:0;width:60px;height:20px;overflow:hidden;padding-left:6px;line-height:21px">Travau…</div>
   <div class="a cell" style="left:410px;top:0;width:60px;height:20px;overflow:hidden;padding-left:6px;line-height:21px">120</div>
   <div class="a cell" style="left:470px;top:0;width:50px;height:20px;overflow:hidden;padding-left:6px;line-height:21px">5</div>
   <div class="a cell" style="left:520px;top:0;width:60px;height:20px;overflow:hidden;padding-left:6px;line-height:21px">Aména…</div>
   <div class="a cell" style="left:580px;top:0;width:60px;height:20px;overflow:hidden;padding-left:6px;line-height:21px">Sans</div>
   <div class="a cell" style="left:640px;top:0;width:60px;height:20px;overflow:hidden;padding-left:6px;line-height:21px">Au fuel</div>
   <div class="a cell" style="left:700px;top:0;width:60px;height:20px;overflow:hidden;padding-left:6px;line-height:21px">Électrique</div>
   <div class="a cell" style="left:760px;top:0;width:70px;height:20px;overflow:hidden;padding-left:6px;line-height:21px">30</div>
   <div class="a cell" style="left:1040px;top:0;width:90px;height:20px;overflow:hidden;padding-left:6px;line-height:21px">0</div>
  </div>
  <div class="a" style="left:0;top:168px;width:1386px;height:21px;background:#fff;border-bottom:1px solid #ededed">
   <div class="a cell" style="left:0px;top:0;width:50px;height:20px;overflow:hidden;padding-left:6px;line-height:21px">64</div>
   <div class="a cell" style="left:50px;top:0;width:60px;height:20px;overflow:hidden;padding-left:6px;line-height:21px">Vente</div>
   <div class="a cell" style="left:110px;top:0;width:60px;height:20px;overflow:hidden;padding-left:6px;line-height:21px">260000</div>
   <div class="a cell" style="left:170px;top:0;width:80px;height:20px;overflow:hidden;padding-left:6px;line-height:21px">Appartement</div>
   <div class="a cell" style="left:250px;top:0;width:60px;height:20px;overflow:hidden;padding-left:6px;line-height:21px">Neuf</div>
   <div class="a cell" style="left:310px;top:0;width:40px;height:20px;overflow:hidden;padding-left:6px;line-height:21px">2012</div>
   <div class="a cell" style="left:350px;top:0;width:60px;height:20px;overflow:hidden;padding-left:6px;line-height:21px">Bon</div>
   <div class="a cell" style="left:410px;top:0;width:60px;height:20px;overflow:hidden;padding-left:6px;line-height:21px">185</div>
   <div class="a cell" style="left:470px;top:0;width:50px;height:20px;overflow:hidden;padding-left:6px;line-height:21px">0</div>
   <div class="a cell" style="left:520px;top:0;width:60px;height:20px;overflow:hidden;padding-left:6px;line-height:21px">Aména…</div>
   <div class="a cell" style="left:580px;top:0;width:60px;height:20px;overflow:hidden;padding-left:6px;line-height:21px">Sans</div>
   <div class="a cell" style="left:640px;top:0;width:60px;height:20px;overflow:hidden;padding-left:6px;line-height:21px">Au fuel</div>
   <div class="a cell" style="left:700px;top:0;width:60px;height:20px;overflow:hidden;padding-left:6px;line-height:21px">Électrique</div>
   <div class="a cell" style="left:760px;top:0;width:70px;height:20px;overflow:hidden;padding-left:6px;line-height:21px">0</div>
   <div class="a cell" style="left:1040px;top:0;width:90px;height:20px;overflow:hidden;padding-left:6px;line-height:21px">0</div>
  </div>
  <div class="a" style="left:0;top:189px;width:1386px;height:21px;background:#fafafa;border-bottom:1px solid #ededed">
   <div class="a cell" style="left:0px;top:0;width:50px;height:20px;overflow:hidden;padding-left:6px;line-height:21px">65</div>
   <div class="a cell" style="left:50px;top:0;width:60px;height:20px;overflow:hidden;padding-left:6px;line-height:21px">Vente</div>
   <div class="a cell" style="left:110px;top:0;width:60px;height:20px;overflow:hidden;padding-left:6px;line-height:21px">250000</div>
   <div class="a cell" style="left:170px;top:0;width:80px;height:20px;overflow:hidden;padding-left:6px;line-height:21px">Appartement</div>
   <div class="a cell" style="left:250px;top:0;width:60px;height:20px;overflow:hidden;padding-left:6px;line-height:21px">Neuf</div>
   <div class="a cell" style="left:310px;top:0;width:40px;height:20px;overflow:hidden;padding-left:6px;line-height:21px">2012</div>
   <div class="a cell" style="left:350px;top:0;width:60px;height:20px;overflow:hidden;padding-left:6px;line-height:21px">Bon</div>
   <div class="a cell" style="left:410px;top:0;width:60px;height:20px;overflow:hidden;padding-left:6px;line-height:21px">185</div>
   <div class="a cell" style="left:470px;top:0;width:50px;height:20px;overflow:hidden;padding-left:6px;line-height:21px">0</div>
   <div class="a cell" style="left:520px;top:0;width:60px;height:20px;overflow:hidden;padding-left:6px;line-height:21px">Aména…</div>
   <div class="a cell" style="left:580px;top:0;width:60px;height:20px;overflow:hidden;padding-left:6px;line-height:21px">Sans</div>
   <div class="a cell" style="left:640px;top:0;width:60px;height:20px;overflow:hidden;padding-left:6px;line-height:21px">Au fuel</div>
   <div class="a cell" style="left:700px;top:0;width:60px;height:20px;overflow:hidden;padding-left:6px;line-height:21px">Électrique</div>
   <div class="a cell" style="left:760px;top:0;width:70px;height:20px;overflow:hidden;padding-left:6px;line-height:21px">0</div>
   <div class="a cell" style="left:1040px;top:0;width:90px;height:20px;overflow:hidden;padding-left:6px;line-height:21px">0</div>
  </div>
  <div class="a" style="left:0;top:210px;width:1386px;height:21px;background:#fff;border-bottom:1px solid #ededed">
   <div class="a cell" style="left:0px;top:0;width:50px;height:20px;overflow:hidden;padding-left:6px;line-height:21px">66</div>
   <div class="a cell" style="left:50px;top:0;width:60px;height:20px;overflow:hidden;padding-left:6px;line-height:21px">Vente</div>
   <div class="a cell" style="left:110px;top:0;width:60px;height:20px;overflow:hidden;padding-left:6px;line-height:21px">190000</div>
   <div class="a cell" style="left:170px;top:0;width:80px;height:20px;overflow:hidden;padding-left:6px;line-height:21px">Appartement</div>
   <div class="a cell" style="left:250px;top:0;width:60px;height:20px;overflow:hidden;padding-left:6px;line-height:21px">Neuf</div>
   <div class="a cell" style="left:310px;top:0;width:40px;height:20px;overflow:hidden;padding-left:6px;line-height:21px">2012</div>
   <div class="a cell" style="left:350px;top:0;width:60px;height:20px;overflow:hidden;padding-left:6px;line-height:21px">Normal</div>
   <div class="a cell" style="left:410px;top:0;width:60px;height:20px;overflow:hidden;padding-left:6px;line-height:21px">175</div>
   <div class="a cell" style="left:470px;top:0;width:50px;height:20px;overflow:hidden;padding-left:6px;line-height:21px">0</div>
   <div class="a cell" style="left:520px;top:0;width:60px;height:20px;overflow:hidden;padding-left:6px;line-height:21px">Aména…</div>
   <div class="a cell" style="left:580px;top:0;width:60px;height:20px;overflow:hidden;padding-left:6px;line-height:21px">Sans</div>
   <div class="a cell" style="left:640px;top:0;width:60px;height:20px;overflow:hidden;padding-left:6px;line-height:21px">Au fuel</div>
   <div class="a cell" style="left:700px;top:0;width:60px;height:20px;overflow:hidden;padding-left:6px;line-height:21px">Électrique</div>
   <div class="a cell" style="left:760px;top:0;width:70px;height:20px;overflow:hidden;padding-left:6px;line-height:21px">0</div>
   <div class="a cell" style="left:1040px;top:0;width:90px;height:20px;overflow:hidden;padding-left:6px;line-height:21px">0</div>
  </div>
  <div class="a" style="left:0;top:231px;width:1386px;height:21px;background:#fafafa;border-bottom:1px solid #ededed">
   <div class="a cell" style="left:700px;top:0;width:60px;height:20px;overflow:hidden;padding-left:6px;line-height:21px">Électrique</div>
  </div>
  <div class="a" style="left:0;top:126px;width:1386px;height:1px;background:repeating-linear-gradient(90deg,#a3bae9 0 1px,#dfe8f6 1px 2px)"></div>
  <div class="a" style="left:0;top:146px;width:1386px;height:1px;background:repeating-linear-gradient(90deg,#a3bae9 0 1px,#dfe8f6 1px 2px)"></div>
  <div class="a" style="left:1291px;top:0;width:88px;height:234px;background:#fff"></div>
 </div>
</div>
<div class="a" style="left:1403px;top:520px;width:1px;height:238px;background:#99bce8"></div>
<div class="a" style="left:1308px;top:519px;width:88px;height:1px;background:#fff"></div>
<div class="a" style="left:17px;top:757px;width:1387px;height:1px;background:#99bce8"></div>
<div class="a" style="left:1419px;top:496px;width:1px;height:277px;background:#99bce8"></div>
<div class="a" style="left:16px;top:758px;width:1px;height:15px;background:#99bce8"></div>
<div class="a" style="left:1404px;top:520px;width:15px;height:237px;background:linear-gradient(90deg,#d9c9ad,#e9e2d6 20%,#f1ede6 60%,#f8f6f2);overflow:hidden">
 <div class="a" style="left:0;top:0;width:15px;height:22px;background:#d8c7a8"><div class="a" style="left:0;top:0;width:15px;height:22px;border-radius:7px 7px 0 0;background:linear-gradient(90deg,#ebe4d8,#f5f2ec 50%,#faf9f6)"></div></div>
 <div class="a" style="left:0;top:215px;width:15px;height:22px;background:#d8c7a8"><div class="a" style="left:0;top:0;width:15px;height:22px;border-radius:0 0 7px 7px;background:linear-gradient(90deg,#e8e0d2,#f3efe8 50%,#faf9f6)"></div></div>
 <div class="a" style="left:0;top:20px;width:15px;height:90px;border-radius:7px;border:1px solid #b9a98b;border-left-color:#fcfbf8;background:linear-gradient(90deg,#fefefe,#f6f3ee 40%,#e4dbca 95%)"></div>
 <svg class="a" style="left:0;top:0" width="15" height="237"><path d="M7.5 8.2L9.9 12.4H5.1Z" fill="#e9e2d6" stroke="#b3a488" stroke-width="1"/><path d="M4.5 227H10.5L7.5 231.6Z" fill="#555"/><path d="M4.2 61.5h6.6M4.2 64.5h6.6M4.2 67.5h6.6" stroke="#c0b196" stroke-width="1"/></svg>
</div>
<div class="a" style="left:17px;top:758px;width:1386px;height:15px;background:linear-gradient(#d9c9ad,#e9e2d6 20%,#f1ede6 60%,#f8f6f2);overflow:hidden">
 <div class="a" style="left:0;top:0;width:22px;height:15px;background:#d8c7a8"><div class="a" style="left:0;top:0;width:22px;height:15px;border-radius:7px 0 0 7px;background:linear-gradient(#ebe4d8,#f5f2ec 50%,#faf9f6)"></div></div>
 <div class="a" style="left:1364px;top:0;width:22px;height:15px;background:#d8c7a8"><div class="a" style="left:0;top:0;width:22px;height:15px;border-radius:0 7px 7px 0;background:linear-gradient(#e8e0d2,#f3efe8 50%,#faf9f6)"></div></div>
 <div class="a" style="left:20px;top:0;width:1167px;height:15px;border-radius:7px;border:1px solid #b9a98b;border-top-color:#fcfbf8;background:linear-gradient(#fefefe,#f6f3ee 40%,#e4dbca 95%)"></div>
 <svg class="a" style="left:0;top:0" width="1386" height="15"><path d="M8.2 7.5L12.4 5.1V9.9Z" fill="#e9e2d6" stroke="#b3a488" stroke-width="1"/><path d="M1376 4.6V10.6L1380.8 7.5Z" fill="#555"/><path d="M599.5 4v6M602.5 4v6M605.5 4v6" stroke="#c0b196" stroke-width="1"/></svg>
</div>
<div class="a" style="left:1404px;top:758px;width:15px;height:15px;background:#dfe8f6"></div>
<div class="a" style="left:16px;top:773px;width:1404px;height:28px;border:1px solid #99bce8;background:linear-gradient(#dfe9f5,#d3e1f1)"></div>
<div class="a tb" style="left:42px;top:781px">Nouveau</div>
<div class="a tb" style="left:118px;top:781px">Supprimer</div>
<div class="a tb" style="left:200px;top:781px">Synchroniser</div>
<div class="a tb" style="left:1188px;top:781px;font-weight:bold">@cfg</div>
<div class="a tb" style="left:1226px;top:781px">|</div>
<div class="a" style="left:1235px;top:776px;width:60px;height:22px;border:1px solid #7fa2cc;border-radius:3px;background:linear-gradient(#c6d6ea 0,#c2d3e9 50%,#9dc6f1 50%,#9ac4f0 100%)"><span class="a tb" style="left:6px;top:4px">autoSync</span></div>
<div class="a" style="left:1297px;top:776px;width:41px;height:22px;border:1px solid #7fa2cc;border-radius:3px;background:linear-gradient(#c6d6ea 0,#c2d3e9 50%,#9dc6f1 50%,#9ac4f0 100%)"><span class="a tb" style="left:6px;top:4px">batch</span></div>
<div class="a tb" style="left:1347px;top:781px">writeAllFields</div>


<!-- ICONS -->
<svg class="a" style="left:17px;top:11px" width="16" height="16"><use href="#iUser"/></svg>
<svg class="a" style="left:16px;top:471px" width="16" height="16"><use href="#iGrid"/></svg>
<svg class="a" style="left:24px;top:429px" width="16" height="16"><use href="#iDisk"/></svg>
<svg class="a" style="left:96px;top:429px" width="16" height="16"><use href="#iUser"/></svg>
<svg class="a" style="left:104px;top:438px" width="9" height="9" viewBox="0 0 9 9"><circle cx="4.6" cy="4.4" r="3.6" fill="url(#gGreen)" stroke="#3a8a28" stroke-width="0.8"/><path d="M4.6 2.2V6.6M2.4 4.4H6.8" stroke="#fff" stroke-width="1.6"/></svg>
<svg class="a" style="left:160px;top:430px" width="16" height="16"><use href="#iStop"/></svg>
<svg class="a" style="left:225px;top:429px" width="16" height="16"><use href="#iUser"/></svg>
<svg class="a" style="left:22px;top:779px" width="16" height="16"><use href="#iAdd"/></svg>
<svg class="a" style="left:98px;top:779px" width="16" height="16"><use href="#iDel"/></svg>
<svg class="a" style="left:179px;top:778px" width="16" height="16"><use href="#iDisk"/></svg>
</body></html>
